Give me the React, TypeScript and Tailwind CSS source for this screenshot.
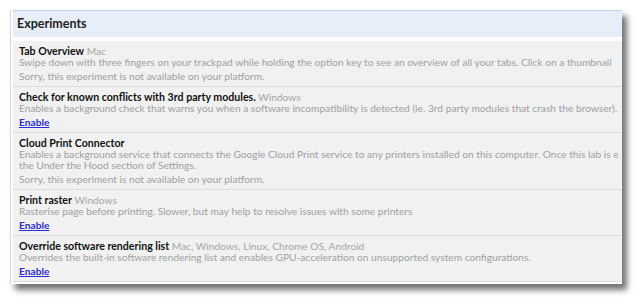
import React from "react";

type Exp = {
  title: string;
  platforms: string;
  desc: string[];
  available: boolean;
};

const exps: Exp[] = [
  {
    title: "Tab Overview",
    platforms: "Mac",
    desc: [
      "Swipe down with three fingers on your trackpad while holding the option key to see an overview of all your tabs. Click on a thumbnail",
    ],
    available: false,
  },
  {
    title: "Check for known conflicts with 3rd party modules.",
    platforms: "Windows",
    desc: [
      "Enables a background check that warns you when a software incompatibility is detected (ie. 3rd party modules that crash the browser).",
    ],
    available: true,
  },
  {
    title: "Cloud Print Connector",
    platforms: "",
    desc: [
      "Enables a background service that connects the Google Cloud Print service to any printers installed on this computer. Once this lab is e",
      "the Under the Hood section of Settings.",
    ],
    available: false,
  },
  {
    title: "Print raster",
    platforms: "Windows",
    desc: [
      "Rasterise page before printing. Slower, but may help to resolve issues with some printers",
    ],
    available: true,
  },
  {
    title: "Override software rendering list",
    platforms: "Mac, Windows, Linux, Chrome OS, Android",
    desc: [
      "Overrides the built-in software rendering list and enables GPU-acceleration on unsupported system configurations.",
    ],
    available: true,
  },
];

export default function App() {
  return (
    <div
      className="w-[640px] h-[304px] bg-white overflow-hidden pt-[10px] pl-[10px]"
      style={{ fontFamily: "Lato, 'Noto Sans', sans-serif" }}
    >
      <div className="w-[612px] h-[274px] bg-white border-l border-[#d8d8d8] pl-[2px] pb-[2px] shadow-[5px_6px_6px_rgba(0,0,0,0.55)] overflow-hidden">
        <div className="h-[27px] bg-[#e8eef9] border-t border-[#c3d0ea] flex items-center pl-[4px]">
          <span className="text-[12.5px] font-bold text-[#222]">Experiments</span>
        </div>
        <div className="h-[4px] bg-white" />
        <div className="bg-[#f1f1f1]">
          {exps.map((e, i) => (
            <div
              key={i}
              className="pl-[6px] pt-[5px] pb-[4px] border-b border-[#dcdcdc] text-[10.2px] leading-[11px] overflow-hidden"
            >
              <div className="whitespace-nowrap">
                <span className="font-bold text-[#111] text-[10.6px]">{e.title}</span>
                {e.platforms && (
                  <span className="text-[#a6a6a6]"> {e.platforms}</span>
                )}
              </div>
              {e.desc.map((d, j) => (
                <div key={j} className="whitespace-nowrap text-[#a0a0a0]">
                  {d}
                </div>
              ))}
              <div className="mt-[3px] whitespace-nowrap">
                {e.available ? (
                  <a href="#" className="text-[#2b2bd6] underline font-bold">
                    Enable
                  </a>
                ) : (
                  <span className="text-[#a0a0a0]">
                    Sorry, this experiment is not available on your platform.
                  </span>
                )}
              </div>
            </div>
          ))}
        </div>
      </div>
    </div>
  );
}
